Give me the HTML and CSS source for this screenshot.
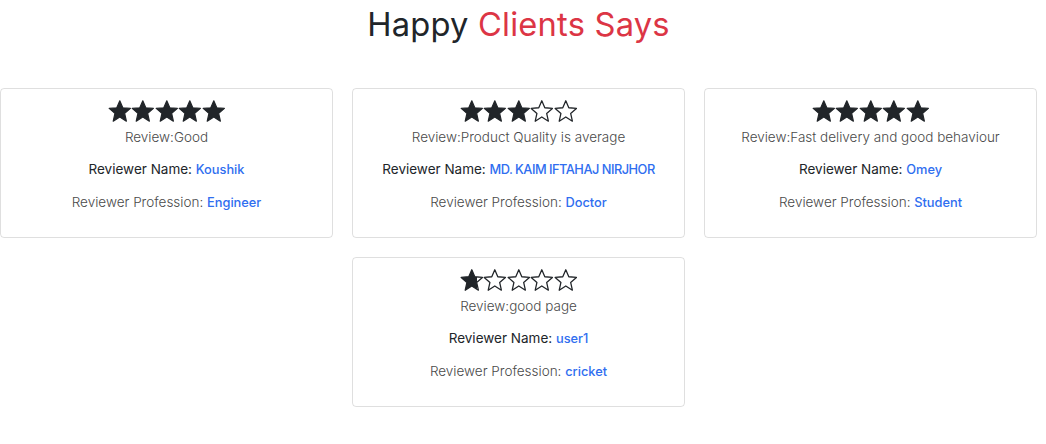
FILE: index.html
```html
<!DOCTYPE html>
<html>
<head>
<meta charset="utf-8">
<link rel="stylesheet" href="styles.css">
</head>
<body>
<svg class="defs" width="0" height="0" aria-hidden="true">
  <defs>
    <linearGradient id="partial" x1="0" x2="1" y1="0" y2="0">
      <stop offset="76%" stop-color="#212529"/>
      <stop offset="76%" stop-color="#ffffff" stop-opacity="0"/>
    </linearGradient>
    <polygon id="star" points="12,0.8 15.06,7.9 22.8,8.55 16.95,13.65 18.7,21.6 12,17.3 5.3,21.6 7.05,13.65 1.2,8.55 8.94,7.9"/>
  </defs>
</svg>
<div class="page">
  <h2 class="title">Happy <span class="red">Clients Says</span></h2>
  <div class="cards">
    <div class="card">
      <div class="stars">
        <svg class="star full" viewBox="0 0 24 23"><use href="#star"/></svg>
        <svg class="star full" viewBox="0 0 24 23"><use href="#star"/></svg>
        <svg class="star full" viewBox="0 0 24 23"><use href="#star"/></svg>
        <svg class="star full" viewBox="0 0 24 23"><use href="#star"/></svg>
        <svg class="star full" viewBox="0 0 24 23"><use href="#star"/></svg>
      </div>
      <p class="review">Review:Good</p>
      <p class="name">Reviewer Name: <span class="val">Koushik</span></p>
      <p class="prof">Reviewer Profession: <span class="val">Engineer</span></p>
    </div>
    <div class="card">
      <div class="stars">
        <svg class="star full" viewBox="0 0 24 23"><use href="#star"/></svg>
        <svg class="star full" viewBox="0 0 24 23"><use href="#star"/></svg>
        <svg class="star full" viewBox="0 0 24 23"><use href="#star"/></svg>
        <svg class="star empty" viewBox="0 0 24 23"><use href="#star"/></svg>
        <svg class="star empty" viewBox="0 0 24 23"><use href="#star"/></svg>
      </div>
      <p class="review">Review:Product Quality is average</p>
      <p class="name">Reviewer Name: <span class="val caps">MD. KAIM IFTAHAJ NIRJHOR</span></p>
      <p class="prof">Reviewer Profession: <span class="val">Doctor</span></p>
    </div>
    <div class="card">
      <div class="stars">
        <svg class="star full" viewBox="0 0 24 23"><use href="#star"/></svg>
        <svg class="star full" viewBox="0 0 24 23"><use href="#star"/></svg>
        <svg class="star full" viewBox="0 0 24 23"><use href="#star"/></svg>
        <svg class="star full" viewBox="0 0 24 23"><use href="#star"/></svg>
        <svg class="star full" viewBox="0 0 24 23"><use href="#star"/></svg>
      </div>
      <p class="review">Review:Fast delivery and good behaviour</p>
      <p class="name">Reviewer Name: <span class="val">Omey</span></p>
      <p class="prof">Reviewer Profession: <span class="val">Student</span></p>
    </div>
    <div class="card">
      <div class="stars">
        <svg class="star partial" viewBox="0 0 24 23"><use href="#star"/></svg>
        <svg class="star empty" viewBox="0 0 24 23"><use href="#star"/></svg>
        <svg class="star empty" viewBox="0 0 24 23"><use href="#star"/></svg>
        <svg class="star empty" viewBox="0 0 24 23"><use href="#star"/></svg>
        <svg class="star empty" viewBox="0 0 24 23"><use href="#star"/></svg>
      </div>
      <p class="review">Review:good page</p>
      <p class="name">Reviewer Name: <span class="val">user1</span></p>
      <p class="prof">Reviewer Profession: <span class="val">cricket</span></p>
    </div>
  </div>
</div>
</body>
</html>
```

FILE: styles.css
```css
* { box-sizing: border-box; }
html, body { margin: 0; padding: 0; background: #fff; }
body {
  font-family: Inter, "Noto Sans", "Liberation Sans", sans-serif;
  color: #212529;
}
.defs { position: absolute; width: 0; height: 0; overflow: hidden; }
.page { width: 1037px; }
.title {
  margin: 0;
  padding-top: 2px;
  height: 88px;
  text-align: center;
  font-weight: 400;
  font-size: 32.7px;
  line-height: 44px;
  letter-spacing: 0.2px;
  color: #212529;
}
.red { color: #dc3545; }
.cards {
  display: flex;
  flex-wrap: wrap;
  justify-content: center;
  gap: 19px;
}
.card {
  width: 333px;
  height: 150px;
  border: 1px solid rgba(0, 0, 0, 0.125);
  border-radius: 4px;
  padding: 11px 8px 11px;
  text-align: center;
}
.stars {
  height: 29px;
  display: flex;
  justify-content: center;
  align-items: flex-start;
}
.star { width: 23.6px; height: 22.6px; display: block; }
.star use { stroke: #212529; stroke-linejoin: round; }
.star.full use { fill: #212529; stroke-width: 1.2; }
.star.empty use { fill: none; stroke-width: 1.3; }
.star.partial use { fill: url(#partial); stroke-width: 1.3; }
.card p { margin: 0 0 16px; line-height: 16px; font-size: 13.5px; }
.review { font-weight: 300; color: #4a4a4a; }
.name { font-weight: 400; color: #212529; }
.prof { font-weight: 300; color: #4a4a4a; }
.val { color: #2f6ef0; font-weight: 500; font-size: 12.8px; }
.val.caps { letter-spacing: -0.5px; }
```
